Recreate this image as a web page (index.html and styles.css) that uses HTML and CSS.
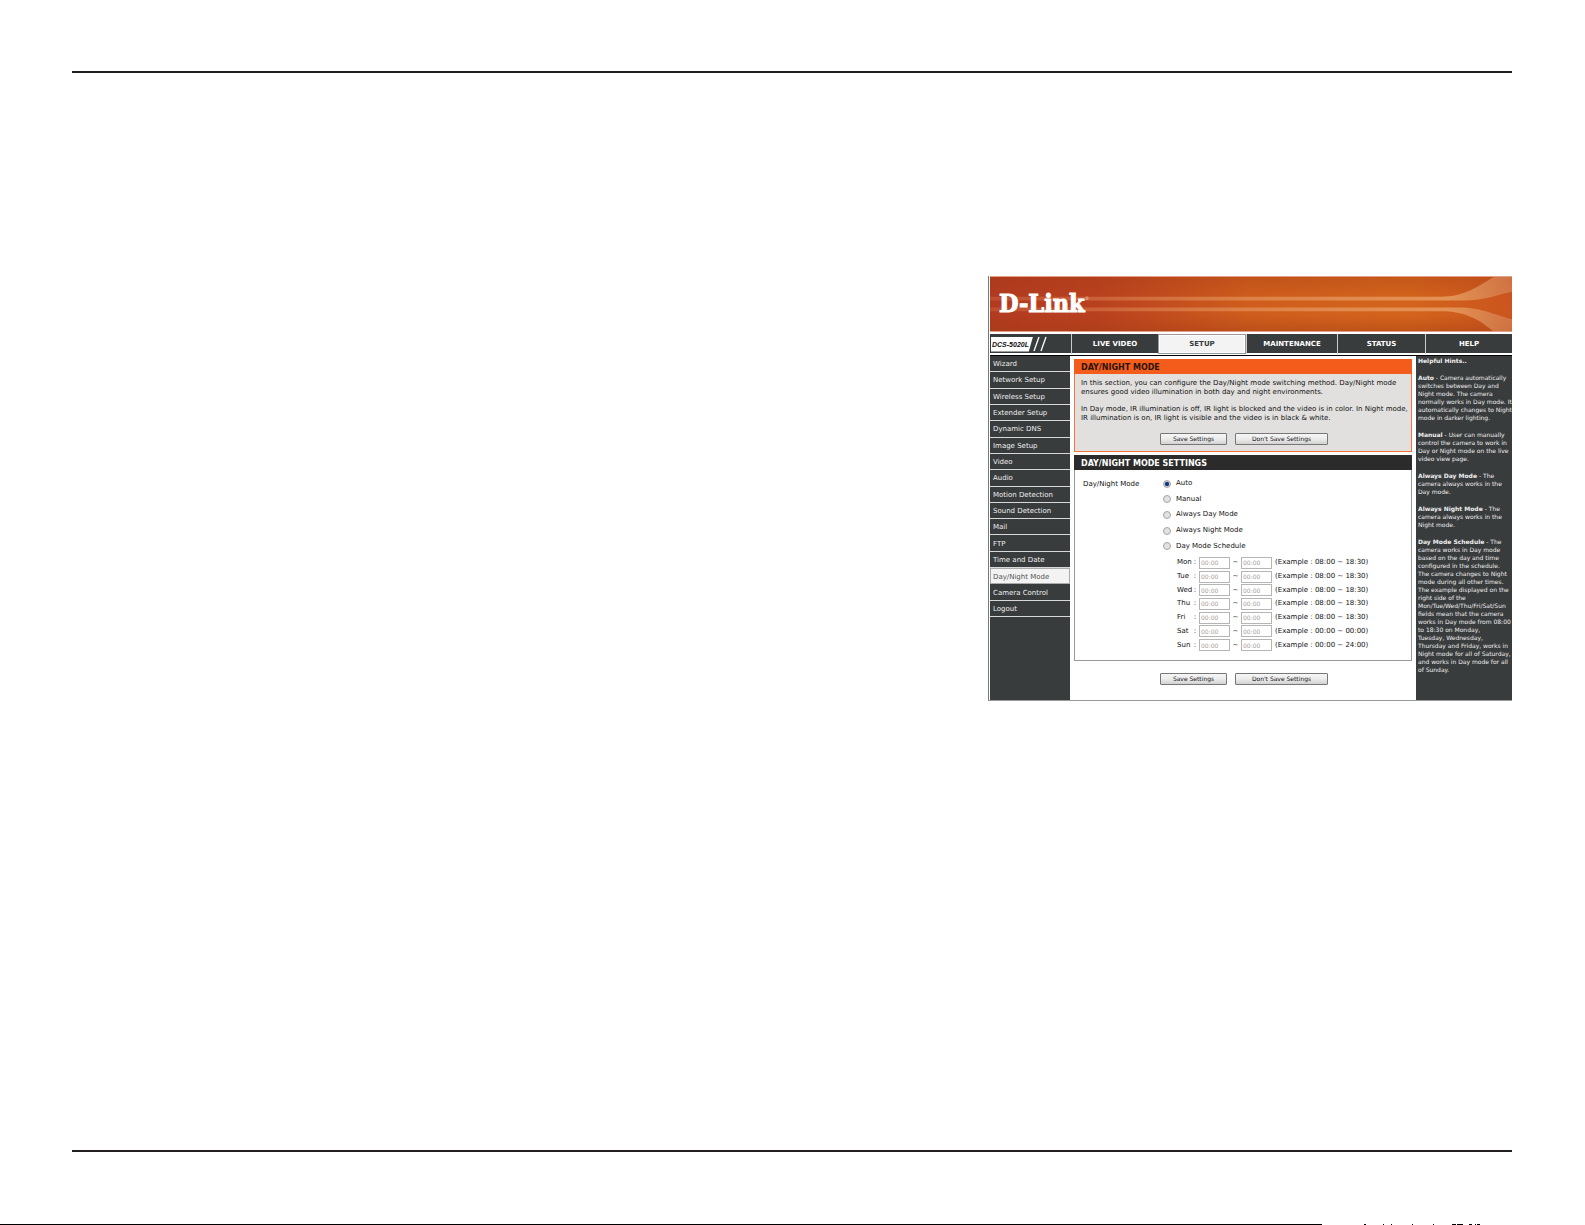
FILE: index.html
```html
<!DOCTYPE html>
<html lang="en">
<head>
  <meta charset="UTF-8">
  <meta name="viewport" content="width=device-width, initial-scale=1.0">
  <title>Day/Night Mode</title>
  <link rel="stylesheet" href="styles.css">
</head>
<body>
  <main class="page">
    <div class="screen">
      <header class="banner">
        <svg class="banner-art" viewBox="0 0 522 55" preserveAspectRatio="none" aria-hidden="true">
          <defs>
            <linearGradient id="beam" x1="0" x2="1" y1="0" y2="0">
              <stop offset="0" stop-color="#e9a06a" stop-opacity="0.2"/>
              <stop offset="0.5" stop-color="#e9a06a" stop-opacity="0.55"/>
              <stop offset="0.88" stop-color="#e9a468" stop-opacity="0.75"/>
              <stop offset="1" stop-color="#d98a5c" stop-opacity="0.6"/>
            </linearGradient>
          </defs>
          <path fill="url(#beam)" d="M0 20H450C476 20 486 10 504 0H522V15C504 19 494 24 473 24H0Z"/>
          <path fill="url(#beam)" d="M0 31H469C492 31 502 38 522 43V55H503C488 43 476 35 450 35H0Z"/>
        </svg>
        <span class="logo">D-Link<sup>®</sup></span>
      </header>

      <nav class="tabs">
        <span class="model">
          <span class="model-name">DCS-5020L</span>
          <svg class="slashes" width="14" height="16" viewBox="0 0 14 16" aria-hidden="true">
            <path d="M1 15L6 1M8 15L13 1" stroke="#fff" stroke-width="1.3"/>
          </svg>
        </span>
        <a href="#">LIVE VIDEO</a>
        <a href="#" class="active">SETUP</a>
        <a href="#">MAINTENANCE</a>
        <a href="#">STATUS</a>
        <a href="#">HELP</a>
      </nav>

      <div class="content">
        <aside class="sidebar">
          <nav class="menu">
            <a href="#">Wizard</a>
            <a href="#">Network Setup</a>
            <a href="#">Wireless Setup</a>
            <a href="#">Extender Setup</a>
            <a href="#">Dynamic DNS</a>
            <a href="#">Image Setup</a>
            <a href="#">Video</a>
            <a href="#">Audio</a>
            <a href="#">Motion Detection</a>
            <a href="#">Sound Detection</a>
            <a href="#">Mail</a>
            <a href="#">FTP</a>
            <a href="#">Time and Date</a>
            <a href="#" class="active">Day/Night Mode</a>
            <a href="#">Camera Control</a>
            <a href="#">Logout</a>
          </nav>
        </aside>

        <form class="main">
          <section class="intro">
            <h1>DAY/NIGHT MODE</h1>
            <p>In this section, you can configure the Day/Night mode switching method. Day/Night mode<br>ensures good video illumination in both day and night environments.</p>
            <p>In Day mode, IR illumination is off, IR light is blocked and the video is in color. In Night mode,<br>IR illumination is on, IR light is visible and the video is in black &amp; white.</p>
            <div class="buttons">
              <button type="button" class="save">Save Settings</button>
              <button type="button" class="cancel">Don't Save Settings</button>
            </div>
          </section>

          <section class="settings">
            <h2>DAY/NIGHT MODE SETTINGS</h2>
            <div class="setting">
              <span class="setting-name">Day/Night Mode</span>
              <div class="options">
                <label><input type="radio" name="mode" checked>Auto</label>
                <label><input type="radio" name="mode">Manual</label>
                <label><input type="radio" name="mode">Always Day Mode</label>
                <label><input type="radio" name="mode">Always Night Mode</label>
                <label><input type="radio" name="mode">Day Mode Schedule</label>
              </div>
            </div>
            <div class="schedule">
              <div class="day">
                <label for="mon"><span>Mon</span><span>:</span></label>
                <input type="text" id="mon" value="00:00" disabled><span class="to">~</span>
                <input type="text" value="00:00" aria-label="Mon end" disabled>
                <span class="example">(Example : 08:00 ~ 18:30)</span>
              </div>
              <div class="day">
                <label for="tue"><span>Tue</span><span>:</span></label>
                <input type="text" id="tue" value="00:00" disabled><span class="to">~</span>
                <input type="text" value="00:00" aria-label="Tue end" disabled>
                <span class="example">(Example : 08:00 ~ 18:30)</span>
              </div>
              <div class="day">
                <label for="wed"><span>Wed</span><span>:</span></label>
                <input type="text" id="wed" value="00:00" disabled><span class="to">~</span>
                <input type="text" value="00:00" aria-label="Wed end" disabled>
                <span class="example">(Example : 08:00 ~ 18:30)</span>
              </div>
              <div class="day">
                <label for="thu"><span>Thu</span><span>:</span></label>
                <input type="text" id="thu" value="00:00" disabled><span class="to">~</span>
                <input type="text" value="00:00" aria-label="Thu end" disabled>
                <span class="example">(Example : 08:00 ~ 18:30)</span>
              </div>
              <div class="day">
                <label for="fri"><span>Fri</span><span>:</span></label>
                <input type="text" id="fri" value="00:00" disabled><span class="to">~</span>
                <input type="text" value="00:00" aria-label="Fri end" disabled>
                <span class="example">(Example : 08:00 ~ 18:30)</span>
              </div>
              <div class="day">
                <label for="sat"><span>Sat</span><span>:</span></label>
                <input type="text" id="sat" value="00:00" disabled><span class="to">~</span>
                <input type="text" value="00:00" aria-label="Sat end" disabled>
                <span class="example">(Example : 00:00 ~ 00:00)</span>
              </div>
              <div class="day">
                <label for="sun"><span>Sun</span><span>:</span></label>
                <input type="text" id="sun" value="00:00" disabled><span class="to">~</span>
                <input type="text" value="00:00" aria-label="Sun end" disabled>
                <span class="example">(Example : 00:00 ~ 24:00)</span>
              </div>
            </div>
          </section>

          <div class="buttons">
            <button type="button" class="save">Save Settings</button>
            <button type="button" class="cancel">Don't Save Settings</button>
          </div>
        </form>

        <aside class="hints">
          <p><b>Helpful Hints..</b></p>
          <p><b>Auto</b> - Camera automatically<br>switches between Day and<br>Night mode. The camera<br>normally works in Day mode. It<br>automatically changes to Night<br>mode in darker lighting.</p>
          <p><b>Manual</b> - User can manually<br>control the camera to work in<br>Day or Night mode on the live<br>video view page.</p>
          <p><b>Always Day Mode</b> - The<br>camera always works in the<br>Day mode.</p>
          <p><b>Always Night Mode</b> - The<br>camera always works in the<br>Night mode.</p>
          <p><b>Day Mode Schedule</b> - The<br>camera works in Day mode<br>based on the day and time<br>configured in the schedule.<br>The camera changes to Night<br>mode during all other times.<br>The example displayed on the<br>right side of the<br>Mon/Tue/Wed/Thu/Fri/Sat/Sun<br>fields mean that the camera<br>works in Day mode from 08:00<br>to 18:30 on Monday,<br>Tuesday, Wednesday,<br>Thursday and Friday, works in<br>Night mode for all of Saturday,<br>and works in Day mode for all<br>of Sunday.</p>
        </aside>
      </div>
    </div>
  </main>
  <div class="page-edge">
    <svg width="160" height="1" viewBox="0 0 160 1" aria-hidden="true">
      <path d="M42 0.5h2M61 0.5h1M69 0.5h1M90 0.5h1M111 0.5h1M130 0.5h4M135 0.5h6M147 0.5h3M153 0.5h1M155 0.5h3" stroke="#000" stroke-width="1"/>
    </svg>
  </div>
</body>
</html>
```
FILE: styles.css
```css
* {
  box-sizing: border-box;
}

body {
  margin: 0;
  min-height: 100vh;
  padding-top: 71px;
  display: flex;
  flex-direction: column;
  background: #fff;
  color: #111;
  font-family: "DejaVu Sans", sans-serif;
  font-size: 7px;
  line-height: 9px;
}

a {
  color: inherit;
  text-decoration: none;
}

h1, h2, p {
  margin: 0;
}

.page {
  flex: 1;
  margin: 0 73px 72px 72px;
  padding-top: 203px;
  border-top: 2px solid #231f20;
  border-bottom: 2px solid #231f20;
}

.screen {
  width: 524px;
  margin-left: auto;
  border-left: 1px solid #77797a;
  border-bottom: 1px solid #999;
  white-space: nowrap;
}

/* banner */
.banner {
  position: relative;
  height: 56px;
  margin-left: 1px;
  padding: 13px 9px 0;
  border-top: 1px solid #e5a08a;
  border-bottom: 1px solid #e5a08a;
  background: linear-gradient(to bottom, rgba(160, 60, 20, 0.3), transparent 40%, transparent 70%, rgba(160, 60, 20, 0.4)),
    linear-gradient(to right, #b23a20, #b9401f 20%, #cf5d1d 50%, #d4641c 80%, #cb551e);
}

.banner-art {
  position: absolute;
  inset: 0;
  width: 100%;
  height: 100%;
}

.logo {
  position: relative;
  color: #fff;
  font-family: "DejaVu Serif Condensed", "DejaVu Serif", serif;
  font-size: 25px;
  font-weight: bold;
  line-height: 28px;
  -webkit-text-stroke: 1px #fff;
}

.logo sup {
  font-size: 5px;
  line-height: 5px;
  vertical-align: 12px;
  -webkit-text-stroke: 0;
  color: #e8b0a0;
}

/* top tabs */
.tabs {
  display: grid;
  grid-template-columns: 81fr 87fr 88fr 91fr 88fr 87fr;
  height: 19px;
  margin: 2px 0 2px 1px;
  background: #393c3d;
  color: #fff;
  font-weight: bold;
}

.tabs a {
  padding-top: 1px;
  border-left: 1px solid #ccc;
  line-height: 19px;
  text-align: center;
}

.tabs .active {
  border: 1px solid #999;
  box-shadow: inset 0 0 0 1px #fff;
  background: #f3f3f3;
  color: #393c3d;
  line-height: 17px;
}

.model {
  display: flex;
  align-items: center;
}

.model-name {
  width: 42px;
  margin-left: 1px;
  padding-left: 1px;
  background: #fff;
  clip-path: polygon(0 0, 100% 0, 90% 100%, 0 100%);
  color: #111;
  font-family: "Liberation Sans", sans-serif;
  font-style: italic;
  line-height: 15px;
}

/* columns */
.content {
  display: grid;
  grid-template-columns: 80px 1fr 96px;
  margin-left: 1px;
  border-top: 1px solid #000;
}

.sidebar, .hints {
  background: #393c3d;
  color: #eee;
}

.menu {
  display: grid;
  grid-auto-rows: 1fr;
  height: 261px;
}

.menu a {
  display: flex;
  align-items: center;
  padding: 2px 0 0 3px;
  border-bottom: 1px solid #d8d8d8;
}

.menu .active {
  border: 1px solid #aaa;
  padding-left: 2px;
  background: #f3f3f3;
  color: #555;
}

.main {
  padding: 3px 4px 15px;
}

h1, h2 {
  padding: 2px 0 0 7px;
  font-size: 8px;
  line-height: 13px;
}

.intro {
  border: 1px solid #f0743c;
  border-top: 0;
  background: #e1e0de;
}

.intro h1 {
  margin: 0 -1px 5px;
  background: #f45c1b;
  color: #2b1408;
}

.intro p {
  margin-bottom: 8px;
  padding-left: 6px;
}

.buttons {
  display: flex;
  gap: 8px;
  padding-left: 86px;
}

.intro .buttons {
  padding: 2px 0 6px 85px;
}

button {
  height: 12px;
  padding: 0;
  border: 1px solid #777;
  border-radius: 1px;
  background: linear-gradient(#f6f6f6, #ececec 50%, #d2d2d2);
  color: #111;
  font-family: "DejaVu Sans", sans-serif;
  font-size: 6px;
  line-height: 8px;
}

.save {
  width: 67px;
}

.cancel {
  width: 93px;
}

.settings {
  margin: 3px 0 12px;
  padding-bottom: 8px;
  border: 1px solid #999;
  border-top: 0;
}

.settings h2 {
  margin: 0 -1px;
  background: #2b2b2b;
  color: #fff;
}

.setting {
  display: flex;
  padding: 6px 0 0 8px;
}

.setting-name {
  width: 80px;
  padding-top: 4px;
}

.options {
  display: grid;
  grid-auto-rows: 1fr;
  height: 78px;
}

.options label {
  display: flex;
  align-items: center;
  gap: 5px;
}

input[type="radio"] {
  appearance: none;
  width: 8px;
  height: 8px;
  margin: 0;
  border: 1px solid #a5a5a5;
  border-radius: 50%;
  background: #e2e2e2;
}

input[type="radio"]:checked {
  background: radial-gradient(circle, #16387a 40%, #c5cfe0 60%);
}

.schedule {
  display: grid;
  grid-auto-rows: 1fr;
  height: 98px;
  padding: 2px 0 0 102px;
}

.day {
  display: flex;
  align-items: center;
}

.day label {
  display: flex;
  justify-content: space-between;
  width: 19px;
  margin-right: 3px;
}

.day input {
  width: 31px;
  height: 12px;
  padding: 0 1px;
  border: 1px solid #b5b5b5;
  background: #fff;
  color: #a8a098;
  font-family: "DejaVu Sans", sans-serif;
  font-size: 6px;
}

.to {
  width: 11px;
  text-align: center;
}

.example {
  margin-left: 3px;
}

/* hints */
.hints {
  padding: 1px 2px 0;
  font-size: 6px;
  line-height: 8px;
}

.hints p {
  margin-bottom: 9px;
}

/* strip along the bottom of the window */
.page-edge {
  display: flex;
  height: 1px;
}

.page-edge::before {
  content: "";
  width: 1322px;
  background: #000;
}
```
